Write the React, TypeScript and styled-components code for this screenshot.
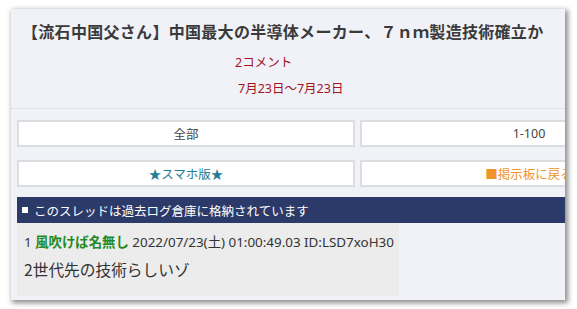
import React from "react";
import styled, { createGlobalStyle } from "styled-components";

const Global = createGlobalStyle`
  html, body { margin: 0; padding: 0; background: #ffffff; }
  body { font-family: "Noto Sans", "Noto Sans CJK JP", sans-serif; }
  * { box-sizing: border-box; }
`;

const Stage = styled.div`
  width: 577px;
  height: 309px;
  padding: 9px 12px 9px 11px;
  background: #ffffff;
`;

const Frame = styled.div`
  width: 554px;
  height: 291px;
  background: #f1f2f7;
  overflow: hidden;
  box-shadow: 2px 2px 5px 1px rgba(0, 0, 0, 0.45);
  padding: 0 0 0 6px;
`;

const Inner = styled.div`
  width: 681px;
`;

const Title = styled.h1`
  margin: 0;
  padding: 11px 0 0 5px;
  height: 41px;
  font-family: "Noto Sans CJK JP", sans-serif;
  font-size: 16px;
  font-weight: 700;
  color: #3a3a3a;
  letter-spacing: 0.3px;
  white-space: nowrap;
  line-height: 22px;
`;

const Meta = styled.div<{ $indent: number }>`
  padding-left: ${(p) => p.$indent}px;
  font-family: "Noto Sans", "Noto Sans CJK JP", sans-serif;
  font-size: 12.5px;
  line-height: 26px;
  color: #a3141e;
`;

const Divider = styled.div`
  margin: 6px 0 0 -6px;
  width: 560px;
  border-top: 1px dotted #d3d4da;
`;

const ButtonGrid = styled.div`
  display: grid;
  grid-template-columns: 338px 338px;
  column-gap: 5px;
  row-gap: 13px;
  padding-top: 11px;
`;

const NavButton = styled.div<{ $color: string }>`
  height: 27px;
  background: #ffffff;
  border: 2px solid #dcdde1;
  display: flex;
  align-items: center;
  justify-content: center;
  font-family: "Noto Sans", "Noto Sans CJK JP", sans-serif;
  font-size: 12.5px;
  color: ${(p) => p.$color};
  white-space: nowrap;
`;

const Notice = styled.div`
  margin-top: 10px;
  height: 26px;
  background: #2c3a69;
  color: #ffffff;
  display: flex;
  align-items: center;
  gap: 6px;
  padding-left: 5px;
  font-family: "Noto Sans CJK JP", sans-serif;
  font-size: 12.5px;
`;

const Square = styled.span`
  width: 6px;
  height: 6px;
  background: #ffffff;
  display: inline-block;
`;

const Post = styled.div`
  width: 382px;
  height: 73px;
  background: #ececec;
  padding: 7px 0 0 7px;
`;

const PostHead = styled.div`
  font-family: "Noto Sans", "Noto Sans CJK JP", sans-serif;
  font-size: 13.4px;
  color: #333333;
  line-height: 22px;
  white-space: nowrap;
`;

const Name = styled.b`
  color: #1f8a1f;
  font-family: "Noto Sans CJK JP", sans-serif;
  font-weight: 700;
`;

const Message = styled.div`
  margin-top: 7px;
  font-family: "Noto Sans CJK JP", sans-serif;
  font-size: 15.7px;
  color: #333333;
  line-height: 20px;
`;

export default function App() {
  return (
    <>
      <Global />
      <Stage>
        <Frame>
          <Inner>
            <Title>【流石中国父さん】中国最大の半導体メーカー、７ｎｍ製造技術確立か</Title>
            <Meta $indent={218}>2コメント</Meta>
            <Meta $indent={221}>7月23日～7月23日</Meta>
            <Divider />
            <ButtonGrid>
              <NavButton $color="#444444">全部</NavButton>
              <NavButton $color="#444444">1-100</NavButton>
              <NavButton $color="#1f7d95">★スマホ版★</NavButton>
              <NavButton $color="#f0932b">■掲示板に戻る</NavButton>
            </ButtonGrid>
            <Notice>
              <Square />
              このスレッドは過去ログ倉庫に格納されています
            </Notice>
            <Post>
              <PostHead>
                1 <Name>風吹けば名無し</Name> 2022/07/23(土) 01:00:49.03 ID:LSD7xoH30
              </PostHead>
              <Message>2世代先の技術らしいゾ</Message>
            </Post>
          </Inner>
        </Frame>
      </Stage>
    </>
  );
}
